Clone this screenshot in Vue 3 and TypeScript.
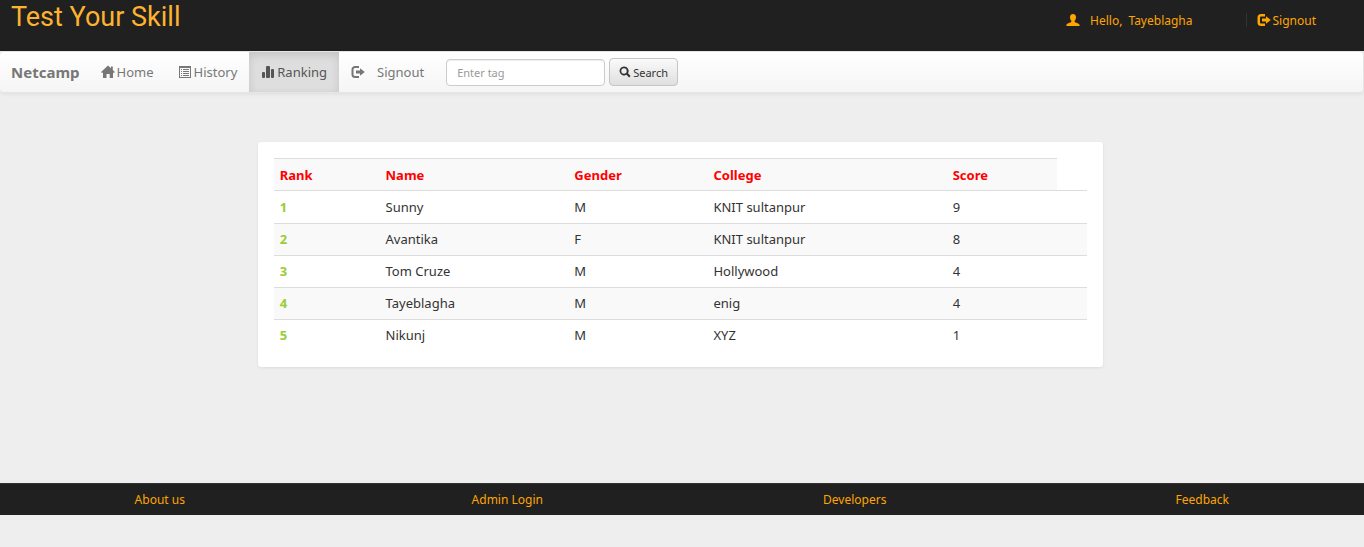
<script setup lang="ts">
import { ref } from 'vue'

interface Player {
  name: string
  gender: string
  college: string
  score: number
}

const tag = ref('')
const columns: string[] = ['Rank', 'Name', 'Gender', 'College', 'Score']
const players: Player[] = [
  { name: 'Sunny', gender: 'M', college: 'KNIT sultanpur', score: 9 },
  { name: 'Avantika', gender: 'F', college: 'KNIT sultanpur', score: 8 },
  { name: 'Tom Cruze', gender: 'M', college: 'Hollywood', score: 4 },
  { name: 'Tayeblagha', gender: 'M', college: 'enig', score: 4 },
  { name: 'Nikunj', gender: 'M', college: 'XYZ', score: 1 },
]
const footerLinks: string[] = ['About us', 'Admin Login', 'Developers', 'Feedback']
</script>

<template>
  <div class="page">
    <header class="top">
      <a href="#" class="logo">Test Your Skill</a>
      <div class="account">
        <a href="#" class="hello">
          <svg class="icon" viewBox="0 0 14 14"><path d="M7 1C4.900 1 4 2.400 4 4.300c0 1.500.5 2.800 1.300 3.500v1.300C4.600 9.900 1 10.300.4 12v1h13.200v-1c-.6-1.700-4.200-2.100-4.900-2.900V7.800C9.500 7.100 10 5.800 10 4.300 10 2.400 9.100 1 7 1z" /></svg>
          <span>Hello,</span><span>Tayeblagha</span>
        </a>
        <a href="#" class="leave">
          <svg class="icon" viewBox="0 0 14 14"><path d="M8 1H4C2 1 .5 2.300.5 4.300v5.400C.5 11.700 2 13 4 13h4v-2.500H4.200c-.7 0-1.200-.4-1.200-1.100V4.600c0-.7.5-1.100 1.200-1.100H8z" /><path d="M9 3.200 13.800 7 9 10.800V8.600H5V5.400h4z" /></svg>
          <span>Signout</span>
        </a>
      </div>
    </header>

    <nav class="bar">
      <a href="#" class="brand">Netcamp</a>
      <a href="#" class="item">
        <svg class="icon" viewBox="0 0 14 14"><path d="M7 .4 10 3.200V1.500h1.800v3.400L13.900 7l-.6.8H12V13H8.700V9H5.500v4H2V7.800H.6L.1 7z" /></svg>
        <span>Home</span>
      </a>
      <a href="#" class="item">
        <svg class="icon" viewBox="0 0 14 14"><path fill-rule="evenodd" d="M1 1h12v12H1zm1 2v9h10V3z" /><path d="M3 4h1v1H3zm2 0h6v1H5zM3 6h1v1H3zm2 0h6v1H5zM3 8h1v1H3zm2 0h6v1H5zm-2 2h1v1H3zm2 0h6v1H5z" /></svg>
        <span>History</span>
      </a>
      <a href="#" class="item active" aria-current="page">
        <svg class="icon" viewBox="0 0 14 14"><rect x="1" y="7" width="3" height="6" rx="1" /><rect x="5" y="1" width="4" height="12" rx="1" /><rect x="10" y="4" width="3" height="9" rx="1" /></svg>
        <span>Ranking</span>
      </a>
      <a href="#" class="item wide">
        <svg class="icon" viewBox="0 0 14 14"><path d="M8 1H4C2 1 .5 2.300.5 4.300v5.400C.5 11.700 2 13 4 13h4v-2H4.200c-.9 0-1.700-.6-1.700-1.500v-5C2.500 3.600 3.300 3 4.200 3H8z" /><path d="M9 3.200 13.800 7 9 10.800V8.600H5V5.400h4z" /></svg>
        <span>Signout</span>
      </a>
      <form class="search" @submit.prevent>
        <input v-model="tag" type="text" placeholder="Enter tag" aria-label="Enter tag" />
        <button type="submit">
          <svg class="icon small" viewBox="0 0 12 12"><path fill-rule="evenodd" d="M5 .5a4.500 4.500 0 1 0 2.500 8.300l2.600 2.700 1.500-1.500L9 7.300A4.500 4.500 0 0 0 5 .5zm0 1.800a2.700 2.700 0 1 1 0 5.400 2.700 2.700 0 0 1 0-5.400z" /></svg>
          <span>Search</span>
        </button>
      </form>
    </nav>

    <main class="card">
      <table>
        <colgroup>
          <col class="c-rank" /><col class="c-name" /><col class="c-gender" /><col class="c-college" /><col class="c-score" /><col />
        </colgroup>
        <thead>
          <tr><th v-for="c in columns" :key="c" scope="col">{{ c }}</th></tr>
        </thead>
        <tbody>
          <tr v-for="(p, i) in players" :key="p.name">
            <td class="rank">{{ i + 1 }}</td>
            <td>{{ p.name }}</td>
            <td>{{ p.gender }}</td>
            <td>{{ p.college }}</td>
            <td>{{ p.score }}</td>
            <td></td>
          </tr>
        </tbody>
      </table>
    </main>

    <footer class="foot">
      <div class="links">
        <a v-for="l in footerLinks" :key="l" href="#">{{ l }}</a>
      </div>
    </footer>
  </div>
</template>

<style>
body {
  margin: 0;
  background: #eee;
}
</style>

<style scoped>
.page {
  font: 13px/19px "Noto Sans", sans-serif;
  color: #333;
}
a {
  text-decoration: none;
  color: inherit;
}
.icon {
  width: 14px;
  height: 14px;
  fill: currentColor;
  flex: none;
}
.top {
  display: flex;
  justify-content: space-between;
  align-items: flex-start;
  box-sizing: border-box;
  height: 51px;
  padding: 0 48px 0 11px;
  background: #202020;
}
.logo {
  font: 27px/34px Roboto, sans-serif;
  color: #fdb32f;
}
.account {
  display: flex;
  padding-top: 13px;
  font-size: 12px;
  line-height: 13px;
  color: orange;
}
.hello {
  display: flex;
  align-items: center;
  gap: 6px;
  padding-right: 53px;
}
.hello .icon {
  margin-right: 4px;
}
.leave {
  display: flex;
  align-items: center;
  gap: 2px;
  padding-left: 10px;
  border-left: 1px solid #333;
}
.bar {
  display: flex;
  box-sizing: border-box;
  height: 42px;
  border: 1px solid #e5e5e5;
  border-left: 0;
  border-radius: 4px;
  background: linear-gradient(#fff, #f5f5f5);
  box-shadow: 0 1px 4px rgba(0, 0, 0, 0.07);
  color: #777;
}
.brand {
  padding: 0 9px 0 11px;
  font-size: 15px;
  font-weight: bold;
  line-height: 41px;
}
.item {
  display: flex;
  align-items: center;
  gap: 2px;
  padding: 0 12px;
}
.item.active {
  color: #555;
  background: #dedede;
  box-shadow: inset 0 3px 8px rgba(0, 0, 0, 0.12);
}
.item.wide {
  gap: 12px;
}
.search {
  display: flex;
  align-items: center;
  gap: 4px;
  margin-left: 10px;
}
.search input {
  box-sizing: border-box;
  width: 159px;
  height: 27px;
  padding: 0 10px;
  border: 1px solid #ccc;
  border-radius: 4px;
  background: #fff;
  box-shadow: inset 0 1px 1px rgba(0, 0, 0, 0.07);
  font: 11px "Noto Sans", sans-serif;
  color: #555;
}
.search input::placeholder {
  color: #999;
}
.search button {
  display: flex;
  align-items: center;
  gap: 2px;
  box-sizing: border-box;
  height: 28px;
  padding: 0 9px;
  border: 1px solid #c5c5c5;
  border-radius: 4px;
  background: linear-gradient(#fafafa, #dfdfdf);
  font: 11px "Noto Sans", sans-serif;
  color: #333;
}
.icon.small {
  width: 12px;
  height: 12px;
}
.card {
  box-sizing: border-box;
  width: 62%;
  margin: 49px 0 116px 18.9%;
  padding: 16px;
  border-radius: 3px;
  background: #fff;
  box-shadow: 0 1px 3px rgba(0, 0, 0, 0.08);
}
table {
  width: 100%;
  table-layout: fixed;
  border-spacing: 0;
}
.c-rank { width: 13%; }
.c-name { width: 23.2%; }
.c-gender { width: 17.1%; }
.c-college { width: 29.4%; }
.c-score { width: 13.6%; }
th,
td {
  padding: 6px;
  border-top: 1px solid #ddd;
  text-align: left;
}
th {
  padding: 7px 6px 5px;
  color: red;
  background: #f9f9f9;
}
tbody tr:first-child td {
  padding-top: 7px;
}
tbody tr:nth-child(even) td {
  background: #f9f9f9;
}
.rank {
  font-weight: bold;
  color: yellowgreen;
}
.foot {
  overflow: hidden;
  margin-bottom: 32px;
  border-top: 1px solid #333;
  background: #202020;
}
.links {
  display: grid;
  grid-template-columns: repeat(4, 1fr);
  margin: 0 -12px 0 -14px;
  font-size: 12px;
  line-height: 31px;
  text-align: center;
  color: orange;
}
</style>
